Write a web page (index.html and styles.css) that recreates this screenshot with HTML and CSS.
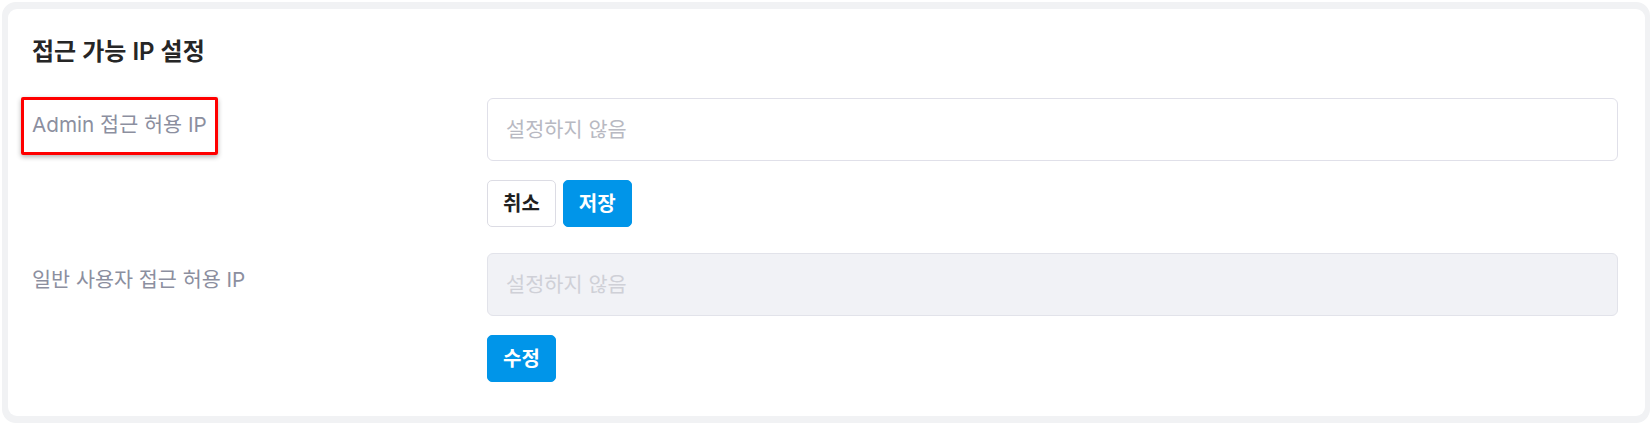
FILE: index.html
```html
<!DOCTYPE html>
<html lang="ko">
<head>
<meta charset="utf-8">
<title>접근 가능 IP 설정</title>
<link rel="stylesheet" href="styles.css">
</head>
<body>
<div class="frame">
  <section class="card">
    <h2 class="title">접근 가능 IP 설정</h2>
    <div class="rows">
      <div class="label-cell">
        <span class="label highlight">Admin 접근 허용 IP</span>
      </div>
      <div class="field">
        <input class="input" type="text" placeholder="설정하지 않음">
        <div class="actions">
          <button class="btn btn-outline" type="button">취소</button>
          <button class="btn btn-primary" type="button">저장</button>
        </div>
      </div>

      <div class="label-cell">
        <span class="label">일반 사용자 접근 허용 IP</span>
      </div>
      <div class="field">
        <input class="input" type="text" placeholder="설정하지 않음" disabled>
        <div class="actions">
          <button class="btn btn-primary" type="button">수정</button>
        </div>
      </div>
    </div>
  </section>
</div>
</body>
</html>
```

FILE: styles.css
```css
* { box-sizing: border-box; }

html, body {
  margin: 0;
  padding: 0;
  background: #ffffff;
  font-family: Inter, "Noto Sans CJK KR", sans-serif;
}

.frame {
  margin: 2px;
  border-style: solid;
  border-color: #f1f2f4;
  border-width: 7px 5px 7px 6px;
  border-radius: 14px;
  background: #f1f2f4;
}

.card {
  background: #ffffff;
  border-radius: 9px;
  padding: 27px 27px 34px 24px;
}

.title {
  margin: 0 0 30px 0;
  font-size: 24px;
  line-height: 32px;
  font-weight: 600;
  color: #262626;
  font-family: Inter, "Noto Sans CJK KR", sans-serif;
}

.rows {
  display: grid;
  grid-template-columns: 455px 1fr;
  row-gap: 26px;
}

.label-cell {
  padding-top: 13px;
}

.label {
  display: inline-block;
  font-size: 20.7px;
  line-height: 28px;
  color: #8c8f9f;
  font-weight: 400;
}

.highlight {
  position: relative;
}

.highlight::after {
  content: "";
  position: absolute;
  top: -14px;
  bottom: -16px;
  left: -11px;
  right: -11px;
  border: 3px solid #ff0000;
  border-radius: 2px;
  box-shadow: 0 2px 5px rgba(0, 0, 0, 0.3);
  pointer-events: none;
}

.field {
  display: flex;
  flex-direction: column;
}

.input {
  display: block;
  width: 100%;
  height: 63px;
  border: 1px solid #e0e0e9;
  border-radius: 6px;
  padding: 0 18px;
  font-family: Inter, "Noto Sans CJK KR", sans-serif;
  font-size: 20.8px;
  color: #333;
  background: #ffffff;
  outline: none;
}

.input::placeholder {
  color: #b8b9c2;
}

.input:disabled {
  background: #f1f2f6;
  border-color: #e2e3ea;
}

.input:disabled::placeholder {
  color: #cfd0d7;
}

.actions {
  display: flex;
  gap: 7px;
  margin-top: 19px;
}

.btn {
  height: 47px;
  padding: 0 15px;
  border-radius: 5px;
  font-family: Inter, "Noto Sans CJK KR", sans-serif;
  font-size: 20px;
  font-weight: 700;
  line-height: 1;
  cursor: pointer;
}

.btn-outline {
  background: #ffffff;
  border: 1px solid #dcdce4;
  color: #1f1f1f;
}

.btn-primary {
  background: #0095e9;
  border: 1px solid #0095e9;
  color: #ffffff;
}
```
